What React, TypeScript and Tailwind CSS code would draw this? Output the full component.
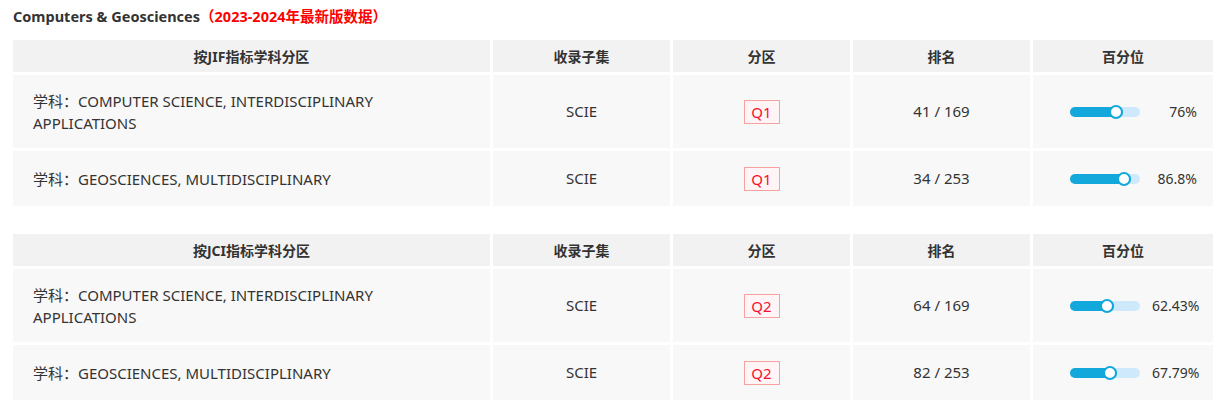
const rows1 = [
  { subject: "学科：COMPUTER SCIENCE, INTERDISCIPLINARY APPLICATIONS", set: "SCIE", q: "Q1", rank: "41 / 169", pct: 76, label: "76%", tall: true },
  { subject: "学科：GEOSCIENCES, MULTIDISCIPLINARY", set: "SCIE", q: "Q1", rank: "34 / 253", pct: 86.8, label: "86.8%", tall: false },
];

const rows2 = [
  { subject: "学科：COMPUTER SCIENCE, INTERDISCIPLINARY APPLICATIONS", set: "SCIE", q: "Q2", rank: "64 / 169", pct: 62.43, label: "62.43%", tall: true },
  { subject: "学科：GEOSCIENCES, MULTIDISCIPLINARY", set: "SCIE", q: "Q2", rank: "82 / 253", pct: 67.79, label: "67.79%", tall: false },
];

type Row = (typeof rows1)[number];

function Slider({ pct }: { pct: number }) {
  return (
    <div className="relative h-[10px] w-[70px] rounded-full bg-[#cde9fb]">
      <div className="relative h-full rounded-full bg-[#13a8dc]" style={{ width: `${(pct * 70) / 100}px` }}>
        <div className="absolute right-0 top-1/2 h-[14px] w-[14px] -translate-y-1/2 rounded-full border-2 border-[#13a8dc] bg-white" />
      </div>
    </div>
  );
}

function PartitionTable({ title, rows, className }: { title: string; rows: Row[]; className?: string }) {
  return (
    <table className={`table-fixed border-separate border-spacing-[3px] w-[1206px] ${className ?? ""}`}>
      <colgroup>
        <col className="w-[477px]" />
        <col className="w-[177px]" />
        <col className="w-[177px]" />
        <col className="w-[177px]" />
        <col className="w-[180px]" />
      </colgroup>
      <thead>
        <tr className="h-[32px] bg-[#f2f2f2] text-[14px] font-bold text-[#333]">
          <th className="p-0 font-bold">{title}</th>
          <th className="p-0 font-bold">收录子集</th>
          <th className="p-0 font-bold">分区</th>
          <th className="p-0 font-bold">排名</th>
          <th className="p-0 font-bold">百分位</th>
        </tr>
      </thead>
      <tbody>
        {rows.map((r) => (
          <tr key={r.subject} className={`${r.tall ? "h-[73px]" : "h-[55px]"} bg-[#f8f8f8] text-[15px] text-[#333]`}>
            <td className="py-0 pl-[20px] pr-[50px] text-left align-middle leading-[22px]">{r.subject}</td>
            <td className="p-0 text-center align-middle">{r.set}</td>
            <td className="p-0 text-center align-middle">
              <span className="inline-block h-[24px] w-[36px] border border-[#f7a1a1] bg-[#fff4f6] text-center text-[15px] leading-[22px] text-[#f5102e]">
                {r.q}
              </span>
            </td>
            <td className="p-0 text-center align-middle">{r.rank}</td>
            <td className="p-0 align-middle">
              <div className="flex items-center justify-end gap-[12px] pr-[16px]">
                <Slider pct={r.pct} />
                <span className="w-[45px] whitespace-nowrap text-right text-[14px]">{r.label}</span>
              </div>
            </td>
          </tr>
        ))}
      </tbody>
    </table>
  );
}

export default function App() {
  return (
    <div className="min-h-[412px] w-full bg-white px-[10px] pt-[6px] font-['Noto_Sans','Noto_Sans_CJK_SC',sans-serif]">
      <div className="h-[20px] pl-[3px] text-[14.5px] font-bold leading-[20px] text-[#333]">
        Computers &amp; Geosciences<span className="text-[#f00]">（2023-2024年最新版数据）</span>
      </div>
      <PartitionTable title="按JIF指标学科分区" rows={rows1} className="mt-[11px]" />
      <PartitionTable title="按JCI指标学科分区" rows={rows2} className="mt-[22px]" />
    </div>
  );
}
